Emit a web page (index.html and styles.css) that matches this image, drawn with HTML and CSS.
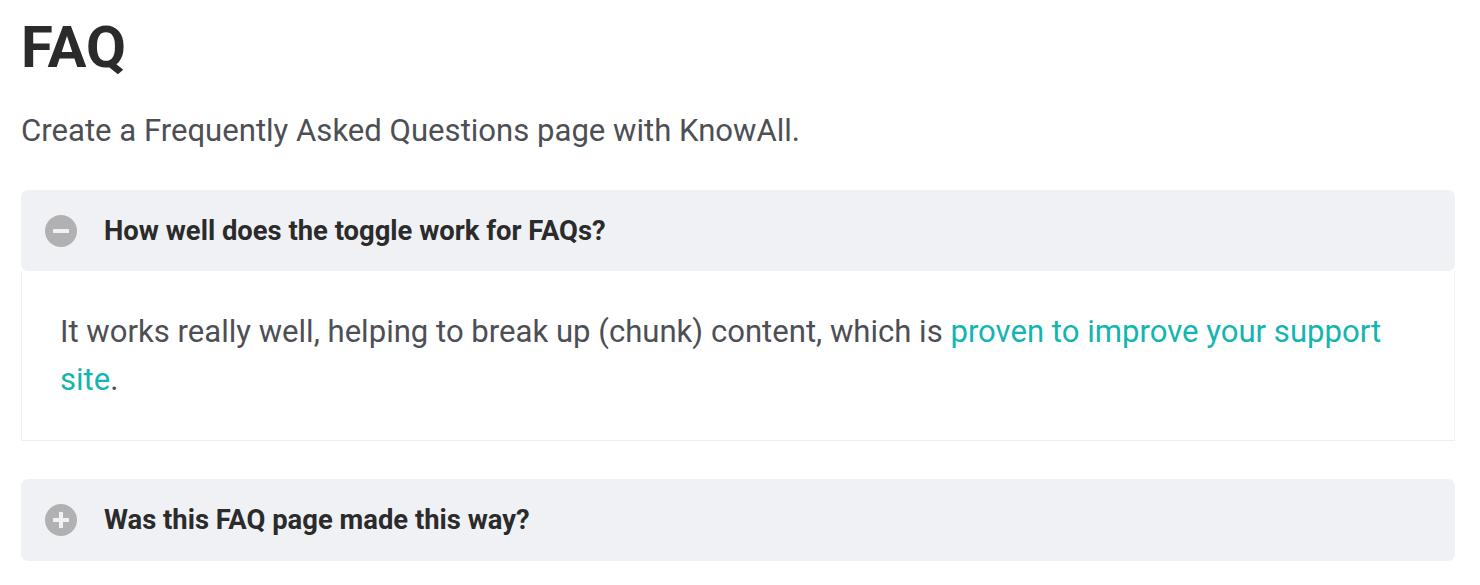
FILE: index.html
```html
<!DOCTYPE html>
<html lang="en">
<head>
<meta charset="utf-8">
<title>FAQ</title>
<link rel="stylesheet" href="styles.css">
</head>
<body>
<main class="page">
  <h1 class="title">FAQ</h1>
  <p class="lead">Create a Frequently Asked Questions page with KnowAll.</p>

  <section class="toggle is-open">
    <div class="toggle-head">
      <svg class="toggle-icon" width="32" height="32" viewBox="0 0 32 32" aria-hidden="true">
        <circle cx="16" cy="16" r="16" fill="#b1b1b3"/>
        <rect x="8" y="14" width="16" height="4" rx="0.5" fill="#f0f1f5"/>
      </svg>
      <h2 class="toggle-title">How well does the toggle work for FAQs?</h2>
    </div>
    <div class="toggle-body">
      <p>It works really well, helping to break up (chunk) content, which is <a href="#">proven to improve your support site</a>.</p>
    </div>
  </section>

  <section class="toggle">
    <div class="toggle-head">
      <svg class="toggle-icon" width="32" height="32" viewBox="0 0 32 32" aria-hidden="true">
        <circle cx="16" cy="16" r="16" fill="#b1b1b3"/>
        <rect x="8" y="14" width="16" height="4" rx="0.5" fill="#f0f1f5"/>
        <rect x="14" y="8" width="4" height="16" rx="0.5" fill="#f0f1f5"/>
      </svg>
      <h2 class="toggle-title">Was this FAQ page made this way?</h2>
    </div>
  </section>
</main>
</body>
</html>
```

FILE: styles.css
```css
* { box-sizing: border-box; }

html, body {
  margin: 0;
  padding: 0;
  background: #ffffff;
}

body {
  font-family: Roboto, "Liberation Sans", Arial, sans-serif;
  color: #333333;
}

.page {
  padding: 11px 25px 0 21px;
}

.title {
  margin: 0;
  font-size: 58px;
  line-height: 72px;
  font-weight: 700;
  color: #2b2b2b;
}

.lead {
  margin: 24px 0 0;
  font-size: 31.1px;
  line-height: 48px;
  color: #4d4f55;
}

.toggle {
  margin-top: 35px;
}

.toggle + .toggle {
  margin-top: 38px;
}

.toggle-head {
  display: flex;
  align-items: center;
  gap: 27px;
  height: 81px;
  padding: 0 0 0 24px;
  background: #f0f1f5;
  border-radius: 7px;
}

.toggle + .toggle .toggle-head {
  height: 82px;
}

.toggle-icon {
  flex: none;
  display: block;
}

.toggle-title {
  margin: 0;
  font-size: 27.4px;
  line-height: 34px;
  font-weight: 700;
  color: #2b2b2b;
}

.toggle-body {
  border: 1px solid #eceef2;
  border-top: 0;
  padding: 37px 38px 36px;
}

.toggle-body p {
  margin: 0;
  font-size: 31.1px;
  line-height: 48px;
  color: #4d4f55;
}

.toggle-body a {
  color: #13b5b1;
  text-decoration: none;
}
```
